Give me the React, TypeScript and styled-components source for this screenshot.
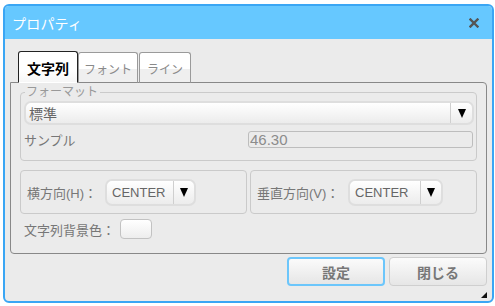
import styled, { createGlobalStyle } from "styled-components";

const GlobalStyle = createGlobalStyle`
  body {
    margin: 0;
    background: #ffffff;
    font-family: "Liberation Sans", "Noto Sans CJK JP", sans-serif;
  }
`;

const Dialog = styled.div`
  position: relative;
  box-sizing: border-box;
  width: 491px;
  height: 299px;
  margin: 4px 0 0 3px;
  border: 2px solid #3aa6f4;
  border-radius: 6px;
  background: #ebebeb;
  display: flex;
  flex-direction: column;
  overflow: hidden;
`;

const TitleBar = styled.div`
  height: 33px;
  background: #66c8ff;
  display: flex;
  align-items: center;
  justify-content: space-between;
  padding: 0 13px 0 7px;
`;

const Title = styled.span`
  color: #ffffff;
  font-size: 14px;
  letter-spacing: 0.2px;
`;

const Body = styled.div`
  flex: 1;
  padding: 12px 5px 0 5px;
  display: flex;
  flex-direction: column;
`;

const TabRow = styled.div`
  display: flex;
  align-items: flex-end;
  padding-left: 8px;
  margin-bottom: -1px;
  position: relative;
  z-index: 1;
`;

const Tab = styled.div<{ $active?: boolean; $w: number; $gap?: number }>`
  box-sizing: border-box;
  width: ${(p) => p.$w}px;
  height: ${(p) => (p.$active ? 32 : 31)}px;
  margin-right: ${(p) => p.$gap ?? 0}px;
  border: 1px solid ${(p) => (p.$active ? "#222" : "#9a9a9a")};
  border-bottom: 1px solid ${(p) => (p.$active ? "#ffffff" : "#888")};
  border-radius: 3px 3px 0 0;
  background: ${(p) =>
    p.$active
      ? "linear-gradient(#ffffff 0%, #ffffff 60%, #f6f6f6 100%)"
      : "linear-gradient(#ffffff 0%, #ffffff 55%, #efefef 56%, #efefef 100%)"};
  display: flex;
  align-items: center;
  justify-content: center;
  font-size: ${(p) => (p.$active ? 14 : 12)}px;
  font-weight: ${(p) => (p.$active ? "bold" : "normal")};
  color: ${(p) => (p.$active ? "#000" : "#8a8a8a")};
  padding-top: 1px;
`;

const Panel = styled.div`
  box-sizing: border-box;
  height: 172px;
  border: 1px solid #888;
  border-radius: 0 4px 4px 4px;
  padding: 2px 9px 0 9px;
  display: flex;
  flex-direction: column;
`;

const Group = styled.fieldset`
  box-sizing: border-box;
  margin: 0;
  padding: 2px 2px 11px 3px;
  border: 1px solid #cacaca;
  border-radius: 4px;
  display: flex;
  flex-direction: column;
  gap: 5px;
`;

const Legend = styled.legend`
  padding: 0 2px 0 1px;
  margin-left: 1px;
  font-size: 12px;
  color: #999;
  line-height: 14px;
`;

const SelectBox = styled.div<{ $w?: number; $h: number; $arrow: number }>`
  box-sizing: border-box;
  ${(p) => (p.$w ? `width: ${p.$w}px;` : "flex: 1;")}
  height: ${(p) => p.$h}px;
  border: 2px solid #dedede;
  border-radius: 7px;
  background: linear-gradient(#ffffff, #ececec);
  display: grid;
  grid-template-columns: 1fr ${(p) => p.$arrow}px;
  align-items: center;
`;

const SelectValue = styled.span<{ $size: number; $pad: number }>`
  padding-left: ${(p) => p.$pad}px;
  font-size: ${(p) => p.$size}px;
  color: #666;
`;

const SelectArrow = styled.span`
  height: 100%;
  border-left: 1px solid #cfcfcf;
  display: flex;
  align-items: center;
  justify-content: center;
  &::after {
    content: "";
    width: 0;
    height: 0;
    border-left: 4px solid transparent;
    border-right: 4px solid transparent;
    border-top: 9px solid #000;
  }
`;

const Row = styled.div`
  display: flex;
  align-items: center;
`;

const Label = styled.span<{ $w?: number }>`
  ${(p) => (p.$w ? `width: ${p.$w}px;` : "")}
  font-size: 13px;
  color: #777;
  white-space: nowrap;
`;

const SampleField = styled.div`
  box-sizing: border-box;
  width: 225px;
  height: 17px;
  border: 1px solid #bdbdbd;
  border-radius: 3px;
  padding-left: 1px;
  font-size: 15px;
  line-height: 15px;
  color: #8c8c8c;
`;

const AlignRow = styled.div`
  display: flex;
  gap: 3px;
  margin-top: 9px;
`;

const AlignBox = styled.div`
  box-sizing: border-box;
  width: 227px;
  height: 44px;
  border: 1px solid #cacaca;
  border-radius: 4px;
  padding: 1px 0 0 6px;
  display: flex;
  align-items: center;
`;

const ColorRow = styled.div`
  display: flex;
  align-items: center;
  margin-top: 5px;
  padding-left: 4px;
`;

const Swatch = styled.div`
  box-sizing: border-box;
  width: 32px;
  height: 20px;
  margin-left: 3px;
  border: 1px solid #c2c2c2;
  border-radius: 4px;
  background: linear-gradient(#ffffff, #ededed);
`;

const Footer = styled.div`
  display: flex;
  justify-content: flex-end;
  gap: 4px;
  padding-top: 3px;
`;

const Button = styled.button<{ $focus?: boolean }>`
  box-sizing: border-box;
  width: 98px;
  height: 29px;
  border: ${(p) => (p.$focus ? "2px solid #6cc6fb" : "1px solid #cfcfcf")};
  border-radius: 4px;
  background: linear-gradient(#fbfbfb, #e6e6e6);
  font-family: "Liberation Sans", "Noto Sans CJK JP", sans-serif;
  font-size: 14px;
  font-weight: bold;
  color: #777;
  padding: 0;
`;

const Grip = styled.div`
  position: absolute;
  right: 5px;
  bottom: 3px;
  width: 0;
  height: 0;
  border-left: 6px solid transparent;
  border-bottom: 6px solid #111;
`;

function CloseIcon() {
  return (
    <svg width="10" height="10" viewBox="0 0 10 10">
      <path d="M1.5 1.5 L8.5 8.5 M8.5 1.5 L1.5 8.5" stroke="#555" strokeWidth="2.4" strokeLinecap="square" />
    </svg>
  );
}

export default function App() {
  return (
    <>
      <GlobalStyle />
      <Dialog>
        <TitleBar>
          <Title>プロパティ</Title>
          <CloseIcon />
        </TitleBar>
        <Body>
          <TabRow>
            <Tab $active $w={60}>文字列</Tab>
            <Tab $w={60} $gap={1}>フォント</Tab>
            <Tab $w={52}>ライン</Tab>
          </TabRow>
          <Panel>
            <Group>
              <Legend>フォーマット</Legend>
              <SelectBox $h={27} $arrow={22}>
                <SelectValue $size={14} $pad={3}>標準</SelectValue>
                <SelectArrow />
              </SelectBox>
              <Row>
                <Label $w={224}>サンプル</Label>
                <SampleField>46.30</SampleField>
              </Row>
            </Group>
            <AlignRow>
              <AlignBox>
                <Label $w={78}>横方向(H)：</Label>
                <SelectBox $w={91} $h={27} $arrow={21}>
                  <SelectValue $size={13} $pad={5}>CENTER</SelectValue>
                  <SelectArrow />
                </SelectBox>
              </AlignBox>
              <AlignBox>
                <Label $w={91}>垂直方向(V)：</Label>
                <SelectBox $w={95} $h={27} $arrow={21}>
                  <SelectValue $size={13} $pad={5}>CENTER</SelectValue>
                  <SelectArrow />
                </SelectBox>
              </AlignBox>
            </AlignRow>
            <ColorRow>
              <Label $w={93}>文字列背景色：</Label>
              <Swatch />
            </ColorRow>
          </Panel>
          <Footer>
            <Button $focus>設定</Button>
            <Button>閉じる</Button>
          </Footer>
        </Body>
        <Grip />
      </Dialog>
    </>
  );
}
